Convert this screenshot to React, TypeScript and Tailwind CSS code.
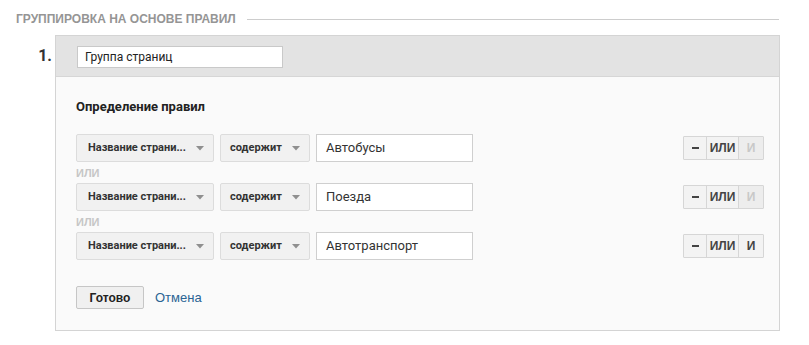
import React from "react";

const Arrow = () => (
  <svg width="8" height="5" viewBox="0 0 8 5" className="shrink-0">
    <path d="M0 0 L8 0 L4 4.5 Z" fill="#8f8f8f" />
  </svg>
);

function Row({ value, andEnabled }: { value: string; andEnabled: boolean }) {
  return (
    <div className="flex items-center h-[28px]">
      <div className="flex items-center justify-between w-[138px] h-[28px] pl-[11px] pr-[9px] bg-[#f1f1f1] border border-[#dcdcdc] rounded-[2px] text-[11px] font-bold text-[#333]">
        <span>Название страни...</span>
        <Arrow />
      </div>
      <div className="ml-[6px] flex items-center justify-between w-[90px] h-[28px] pl-[9px] pr-[9px] bg-[#f1f1f1] border border-[#dcdcdc] rounded-[2px] text-[11px] font-bold text-[#333]">
        <span>содержит</span>
        <Arrow />
      </div>
      <div className="ml-[6px] flex items-center w-[157px] h-[28px] pl-[9px] bg-white border border-[#cfcfcf] text-[13px] text-[#333]">
        {value}
      </div>
      <div className="ml-auto flex h-[24px] border border-[#d6d6d6] rounded-[1px] text-[12px] font-bold font-['Liberation_Sans',Arial,sans-serif]">
        <div className="w-[23px] flex items-center justify-center bg-[#f3f3f3] text-[#444] border-r border-[#d6d6d6]">
          <span className="block w-[7px] h-[2px] bg-[#444]" />
        </div>
        <div className="w-[32px] flex items-center justify-center bg-[#f3f3f3] text-[#444] border-r border-[#d6d6d6]">
          ИЛИ
        </div>
        <div
          className={
            andEnabled
              ? "w-[24px] flex items-center justify-center bg-[#f3f3f3] text-[#444]"
              : "w-[24px] flex items-center justify-center bg-[#ededed] text-[#c8c8c8]"
          }
        >
          И
        </div>
      </div>
    </div>
  );
}

function Or() {
  return (
    <div className="h-[21px] flex items-center text-[11px] font-bold text-[#c6c6c6] leading-none pt-[2px] font-['Liberation_Sans',Arial,sans-serif]">
      ИЛИ
    </div>
  );
}

export default function App() {
  return (
    <div className="w-[809px] h-[345px] bg-white font-['Roboto','Liberation_Sans',sans-serif] text-[#333]">
      <div className="flex items-center pt-[12px] h-[26px] pl-[16px] pr-[30px]">
        <span className="text-[12px] font-bold text-[#959595] leading-none font-['Liberation_Sans',Arial,sans-serif]">
          ГРУППИРОВКА НА ОСНОВЕ ПРАВИЛ
        </span>
        <div className="flex-1 ml-[11px] h-px bg-[#cdcdcd]" />
      </div>
      <div className="flex mt-[9px]">
        <div className="w-[55px] pr-[3px] pt-[9px] text-right text-[16px] font-bold text-[#333]">
          1.
        </div>
        <div className="w-[725px] border border-[#d4d4d4]">
          <div className="h-[41px] bg-[#e3e3e3] border-b border-[#d6d6d6] pl-[21px] pt-[10px]">
            <div className="w-[206px] h-[22px] bg-white border border-[#c9c9c9] flex items-center pl-[7px] text-[12px] text-[#222]">
              Группа страниц
            </div>
          </div>
          <div className="bg-[#fafafa] pl-[20px] pr-[15px] pt-[21px] pb-[21px]">
            <div className="text-[13px] font-bold text-[#222] leading-[18px]">Определение правил</div>
            <div className="mt-[18px]">
              <Row value="Автобусы" andEnabled={false} />
              <Or />
              <Row value="Поезда" andEnabled={false} />
              <Or />
              <Row value="Автотранспорт" andEnabled={true} />
            </div>
            <div className="mt-[26px] flex items-center">
              <div className="w-[68px] h-[23px] flex items-center justify-center bg-[#f0f0f0] border border-[#c6c6c6] rounded-[2px] text-[12px] font-bold text-[#222] font-['Liberation_Sans',Arial,sans-serif]">
                Готово
              </div>
              <span className="ml-[11px] text-[13px] text-[#2a6494] font-['Liberation_Sans',Arial,sans-serif]">
                Отмена
              </span>
            </div>
          </div>
        </div>
      </div>
    </div>
  );
}
